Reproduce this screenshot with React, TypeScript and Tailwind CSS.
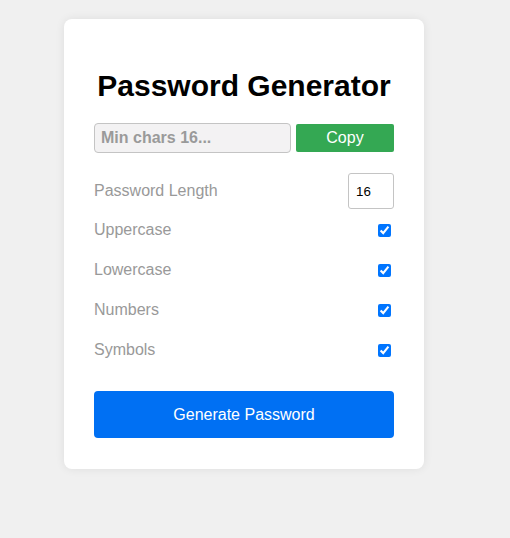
import React from "react";

const options = ["Uppercase", "Lowercase", "Numbers", "Symbols"];

export default function App() {
  return (
    <div className="min-h-[538px] bg-[#f0f0f0] pt-[19px] pl-[64px] font-['Liberation_Sans',Arial,sans-serif]">
      <div className="w-[360px] rounded-lg bg-white p-[30px] pb-[31px] shadow-[0_0_10px_rgba(0,0,0,0.08)]">
        {/* Title */}
        <h1 className="mt-[20px] mb-[20px] text-center text-[30px] leading-[34px] font-bold text-black">
          Password Generator
        </h1>

        {/* Output + copy */}
        <div className="flex items-center gap-[5px]">
          <input
            type="text"
            readOnly
            placeholder="Min chars 16..."
            className="h-[30px] w-[197px] rounded-[4px] border border-[#c4c4c4] bg-[#f3f2f3] px-[6px] text-[16px] font-bold text-black placeholder:text-[#9a9a9a] outline-none"
          />
          <button className="h-[28px] w-[98px] rounded-[2px] bg-[#34a853] text-[16px] text-white">
            Copy
          </button>
        </div>

        {/* Settings */}
        <div className="mt-[20px]">
          <div className="flex h-[36px] items-center justify-between">
            <label className="text-[16px] text-[#999]">Password Length</label>
            <input
              type="number"
              defaultValue={16}
              className="h-[36px] w-[46px] rounded-[3px] border border-[#c4c4c4] pl-[7px] text-[13.33px] text-black outline-none [appearance:textfield]"
            />
          </div>
          <div className="mt-[1px]">
            {options.map((opt) => (
              <div key={opt} className="flex h-10 items-center justify-between">
                <label className="text-[16px] text-[#999]">{opt}</label>
                <input
                  type="checkbox"
                  defaultChecked
                  className="mr-[3px] h-[13px] w-[13px] accent-[#0075ff]"
                />
              </div>
            ))}
          </div>
        </div>

        <button className="mt-[21px] h-[47px] w-full rounded-[4px] bg-[#0070f3] text-[16px] text-white">
          Generate Password
        </button>
      </div>
    </div>
  );
}
